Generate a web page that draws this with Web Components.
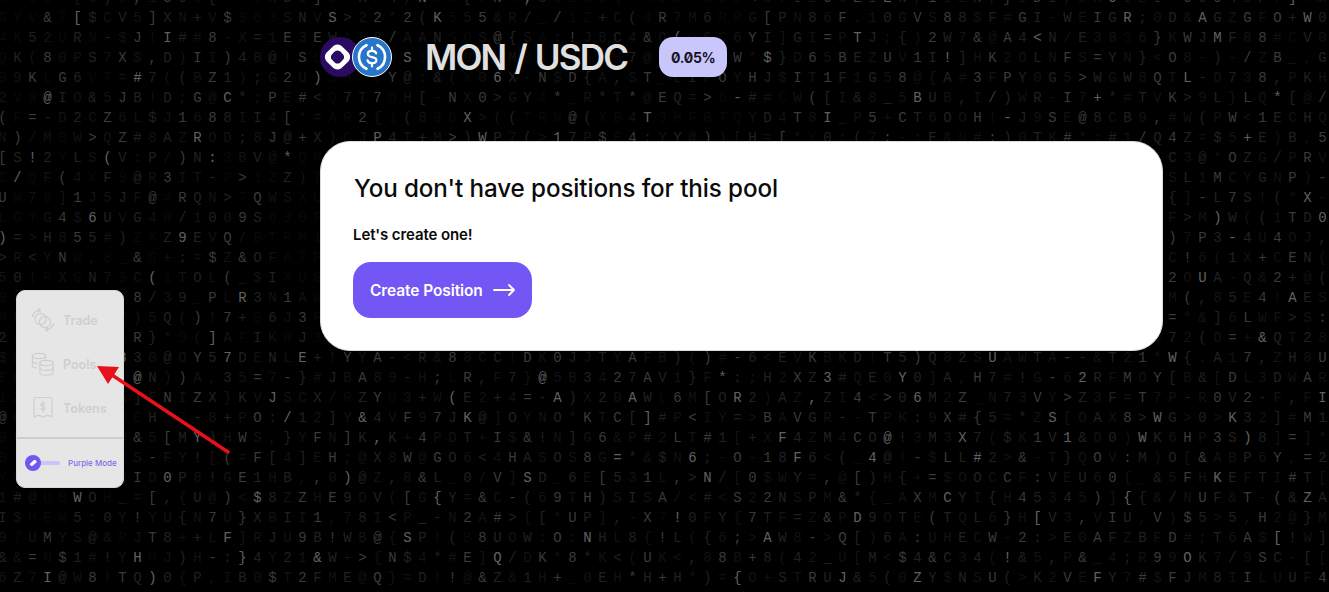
<!DOCTYPE html>
<html lang="en">
<head>
<meta charset="utf-8">
<title>MON / USDC</title>
<style>
  html, body { margin: 0; height: 592px; overflow: hidden; background: #000; }
  body { position: relative; font-family: Inter, "Liberation Sans", sans-serif; }
</style>
</head>
<body>
<matrix-rain></matrix-rain>
<app-page>
  <side-rail slot="rail">
    <rail-item label="Trade">
      <svg slot="icon" viewBox="0 0 24 24" width="24" height="24" fill="none" stroke="currentColor" stroke-width="1.2" stroke-linecap="round" stroke-linejoin="round">
        <circle cx="9.5" cy="11" r="5.6"/><circle cx="14" cy="14" r="5.6"/>
        <path d="M1.5 8.5C2.5 4.5 5.5 2.2 9.5 2.2"/><path d="M7.5 .6l2 1.6-2 1.6"/>
        <path d="M22.5 15.5c-.9 4-3.9 6.3-8 6.3"/><path d="M16.5 23.4l-2-1.6 2-1.6"/>
      </svg>
    </rail-item>
    <rail-item label="Pools">
      <svg slot="icon" viewBox="0 0 24 24" width="24" height="24" fill="none" stroke="currentColor" stroke-width="1.2" stroke-linecap="round" stroke-linejoin="round">
        <ellipse cx="8" cy="4" rx="6.6" ry="2.6"/>
        <path d="M1.4 4v9.5c0 1.3 1.9 2.3 4.6 2.5"/><path d="M1.4 8.7c0 1.3 2 2.4 4.6 2.6"/><path d="M14.6 4v3"/>
        <ellipse cx="15.5" cy="11" rx="6.6" ry="2.6"/>
        <path d="M8.9 11v9.5c0 1.5 3 2.6 6.6 2.6s6.6-1.1 6.6-2.6V11"/><path d="M8.9 15.8c0 1.5 3 2.6 6.6 2.6s6.6-1.1 6.6-2.6"/>
      </svg>
    </rail-item>
    <rail-item label="Tokens">
      <svg slot="icon" viewBox="0 0 24 24" width="24" height="24" fill="none" stroke="currentColor" stroke-width="1.2" stroke-linecap="round" stroke-linejoin="round">
        <path d="M5 1.500h14c1.200 0 2 .8 2 2V21c-1.300-.9-3-1.700-4.500-1.700-1.800 0-3 1.700-4.500 1.700s-2.700-1.700-4.500-1.700C6 19.300 4.300 20.100 3 21V3.500c0-1.200.8-2 2-2z"/>
        <path d="M14.200 8.300c-.4-.9-1.200-1.300-2.200-1.300-1.300 0-2.200.7-2.200 1.700 0 2.300 4.400 1.100 4.400 3.400 0 1-.9 1.700-2.200 1.700-1 0-1.800-.4-2.200-1.300"/>
        <path d="M12 5.500v10"/>
      </svg>
    </rail-item>
    <rail-toggle slot="footer">Purple Mode</rail-toggle>
  </side-rail>
  <pool-header slot="head" pair="MON / USDC" fee="0.05%"></pool-header>
  <empty-card slot="main" title="You don't have positions for this pool" note="Let's create one!">
    <action-button>Create Position</action-button>
  </empty-card>
</app-page>
<note-arrow></note-arrow>

<script>
// what could be read off the reference, one row per 20px. ~ is a cell too faint to read
const RAIN_ROWS = [
  "~~~~~[6)~,150~[~~~RU0]~~K~4,N~~[7N~;5~~~~~~~~~~~~~<07IE06Z1EN,1IEN,}IDI,#X0IEI=0004D/7]~",
  "~~~&~[$CV5]XN+V$~~~SNVS>22*2(K~55&R/_/~~+C(~R7M6~~G[PN86F.10GVS88$F#GI-WEIGR;0D&AGZGFO+W0",
  "~~52~R~-$J!I##8-X=1E3EW~~8/AAN~~S@{S~:!J8C4&Q(~S~6YI]GI=PTJ;{)2W7&@A4<N/E38~6}KWJMF88#~V0",
  "~K(80PS7X$,D)II)4B@!S~~~~~~S~~~~~~M~~~~~~~7@~~~~~W*$}D65BEZUV1I!]HK2OLNFS=YN}<O8-)-/ZB_,G",
  "~9K~G6~~=#7((BZ1);G2U)~~~~Y@:&(~06X-N$D{A,ST_LIFOYHJ$IT1F1G58@{A#3FPY0G5>WGW8QTL-O738,PKH",
  "2~~@IO&5JB!D;G@C*;PE#<~7T7~H[-NX0>GY~*_R*T*@EQ=>~-##~W([I&8_5BUB,I/)WR-I7+*#TVK>9L}LQ*[@/",
  "(~=-D2CZ6L$J1688II4[*=~~2{~(8~~X>((~~~@(~~4T~~~~~~YD4T8I_P5+CT6OOH!-J9SE@8CB9,#W(PW<1ECHQ",
  "N)/M~W>QZ#8AZROD;8J@+X)~JP4T+M>)WP7(>17P$~4:YY@))[H=[*~0:(7:-;E&~#:)0TK#*;#1/Q4Z=$5+E)B,5",
  "[S!2~LS(V:P/)N:~BV@*~~~~~~~~~~~~~~~~~~~~~~~~~~~~~~~~~~~~~~~~~~~~~~~~~~~~~~~~~~C3@*OZG/PRV",
  "~/~F(4~F~@R3IT-~>~~Z)~~~~~~~~~~~~~~~~~~~~~~~~~~~~~~~~~~~~~~~~~~~~~~~~~~~~~~~~~SL1MCYGNP)-",
  "U~7~]1J5JF@~RQN>~QWS~~~~~~~~~~~~~~~~~~~~~~~~~~~~~~~~~~~~~~~~~~~~~~~~~~~~~~~~~~{]-L7S!(*X-",
  "~~~G4$6UVG4~/1009S~~~~~~~~~~~~~~~~~~~~~~~~~~~~~~~~~~~~~~~~~~~~~~~~~~~~~~~~~~~~F>M)W((1TD0",
  ")=>H855#)~~Z9EVQ/~~~~~~~~~~~~~~~~~~~~~~~~~~~~~~~~~~~~~~~~~~~~~~~~~~~~~~~~~~~~~)7P3-4U4OJ,",
  ">R<YN~,~_&~+:=$Z&OF~~~~~~~~~~~~~~~~~~~~~~~~~~~~~~~~~~~~~~~~~~~~~~~~~~~~~~~~~~~C!6(1X+CEN(",
  "50!~X~N7~C(~TOL(_$I~~~~~~~~~~~~~~~~~~~~~~~~~~~~~~~~~~~~~~~~~~~~~~~~~~~~~~~~~~~2OUA-Q&2+@(",
  "~~~~~~~~~8/39_PLR3N1A~~~~~~~~~~~~~~~~~~~~~~~~~~~~~~~~~~~~~~~~~~~~~~~~~~~~~~~~~M(,85E4!AES",
  "~~~~~~~~~)5Q()!7+~6J3~~~~~~~~~~~~~~~~~~~~~~~~~~~~~~~~~~~~~~~~~~~~~~~~~~~~~~~~~=*&]6LWF>S:",
  "2~~~~~~~~R}*~(]A~IK~J~~~~~~~~~~~~~~~~~~~~~~~~~~~~~~~~~~~~~~~~~~~~~~~~~~~~~~~~~72(O=+&QT28",
  "$~~~~~~~830@OY57DENLE+!YYA-<R&88CC!DK0JJTYAFB)()#-6<EVKBKD!T5)Q82SUAWTA--&T21*W{.A17,ZH8U",
  "~~~~~~~~~@N))A,35=7-}#JBA89-H;~R,F7}@5B3427AV1}F*:;H2XZ3#QE0Y0]A,H7#!G-62RFMOY[B&[DL3DWAR",
  "~~~~~~~~A]ENIZX}KVJSCX/~ZY~3+W(E2+4=-A)X20AW~6M[OR2)AZ,ZI4<>06M2Z_N73VY>Z3F=T7P-R0V2-F,FI",
  "@~~~~~~~~~H~~-8+PO:/12]Y&4VF97JK@]OYNO*KTC[]#P<IY=>BAVGR--TPK:9X#{5=*ZS[OAX8>WG>0>K32]#M1",
  "~~~~~~~~~&5[MY)HWS,}YFN]K,K+4PDT+I$&!N]G6&P#2LT#1[+XF4ZM4CO@!3M3X7($K1V1&O0)WK6HP3S)8]=]*",
  "~~~~~~~~~S-FY![(=F[4]EH;@X8W@GO6<4HASOS8G=*&$N6;-O-18F6<(_4@!-$LL#2>&-T}QOV:M)O[&ABP6Y,=2",
  "~~~~~~~~~ID0P8!GE1HB,,0)@Z,8&L_0/V]SD_6E[531L,>N/[0$WY=,@[)H{+=$OOCCF:VEU60{_&5FHKEFTI#T[",
  "1#@~~WO~_=[,{U@)<$8ZZHE9DV([G{Y=&C-(69TH)SISA/<#<S22NSPM&*{_AXMCYI{H45345)]{{&/NUF&T-(&ZA",
  "I$~~~5:0Y!YU{N7U}XBII1,78I<P_-N2A#>{[*UP],-X~!0FY{7TF=Z&PD9OTE(TQL6}H[V3,VIU,V)$5>5,H2@}M",
  "9~UMYS@&~JT8++LF]RJU9B!WB@{SP!(~8UOW:O:NHL8{!L({6;>AW8->Q[)6A:UHECW-2:>E0AFZBFD#;T6A$[!W]",
  "&&=~$1#!YH~J)H-:}4Y21&W+>{N$4*#E]Q/DK*8*K<(UK<,88B+8(42_U[M<$4&C34(!&5,P&_4;R99OK7/9SC-[[",
  "6Z7I@W8!TQ)0{P,IB0$T2FME@Q}=D!!@&Z&1H+_0EH*H+H*)={O+STRUJ&5(0ZY$NSU(>K2VEFY7#$FJM8IILUUF4"
];

class MatrixRain extends HTMLElement {
  constructor() {
    super();
    this.attachShadow({ mode: 'open' });
    this.shadowRoot.innerHTML = `
      <style>
        :host {
          display: block;
          position: absolute;
          top: -12px;
          left: -5px;
          width: 1340px;
          height: 604px;
          overflow: hidden;
        }
        .grid {
          display: grid;
          grid-template-columns: repeat(89, 15px);
          grid-auto-rows: 20px;
          font: 14px/20px "Liberation Mono", monospace;
          text-align: center;
        }
      </style>
      <div class="grid"></div>
    `;
  }

  connectedCallback() {
    const filler = 'ABCDEFGHKLMNPQRSTUVWXYZ0123456789';
    let html = '';
    RAIN_ROWS.forEach((row, r) => {
      for (let c = 0; c < 89; c++) {
        const h = (Math.imul(r * 131 + c * 7 + 3, 2654435761) >>> 8) % 100;
        const faint = row[c] === '~';
        const ch = faint ? filler[h % filler.length] : row[c];
        let grey = 18;
        if (faint) grey = 9;
        else if (h > 92) grey = 96;
        else if (h > 72) grey = 58;
        else if (h > 42) grey = 32;
        const safe = ch === '<' ? '&lt;' : ch === '&' ? '&amp;' : ch === '>' ? '&gt;' : ch;
        html += `<span style="color:rgb(${grey},${grey},${grey})">${safe}</span>`;
      }
    });
    this.shadowRoot.querySelector('.grid').innerHTML = html;
  }
}

class AppPage extends HTMLElement {
  constructor() {
    super();
    this.attachShadow({ mode: 'open' });
    this.shadowRoot.innerHTML = `
      <style>
        :host {
          display: grid;
          grid-template-columns: 320px 843px;
          position: relative;
          height: 592px;
        }
        .main {
          display: flex;
          flex-direction: column;
          gap: 64px;
          padding-top: 37px;
        }
      </style>
      <div><slot name="rail"></slot></div>
      <div class="main">
        <slot name="head"></slot>
        <slot name="main"></slot>
      </div>
    `;
  }
}

class SideRail extends HTMLElement {
  constructor() {
    super();
    this.attachShadow({ mode: 'open' });
    this.shadowRoot.innerHTML = `
      <style>
        :host {
          display: block;
          box-sizing: border-box;
          width: 108px;
          height: 198px;
          margin: 290px 0 0 16px;
          background: #e6e6e6;
          border: 1px solid #d9d9d9;
          border-radius: 9px;
        }
        .items {
          display: flex;
          flex-direction: column;
          gap: 20px;
          height: 148px;
          padding-top: 17px;
          box-sizing: border-box;
          border-bottom: 2px solid #cdcdcd;
        }
      </style>
      <div class="items"><slot></slot></div>
      <slot name="footer"></slot>
    `;
  }
}

class RailItem extends HTMLElement {
  constructor() {
    super();
    this.attachShadow({ mode: 'open' });
    this.shadowRoot.innerHTML = `
      <style>
        :host {
          display: flex;
          align-items: center;
          gap: 8px;
          height: 24px;
          padding-left: 14px;
          color: #cfcfcf;
          font: 600 12.500px Inter, sans-serif;
        }
        ::slotted(svg) { flex: none; }
      </style>
      <slot name="icon"></slot>
      <span class="label"></span>
    `;
  }

  connectedCallback() {
    this.shadowRoot.querySelector('.label').textContent = this.getAttribute('label');
  }
}

class RailToggle extends HTMLElement {
  constructor() {
    super();
    this.attachShadow({ mode: 'open' });
    this.shadowRoot.innerHTML = `
      <style>
        :host {
          display: flex;
          align-items: center;
          height: 47px;
          padding-left: 8px;
          color: #7d6ee6;
          font: 500 8px Inter, sans-serif;
          white-space: nowrap;
        }
        .track {
          display: flex;
          align-items: center;
          width: 35px;
          height: 4px;
          margin-right: 8px;
          background: #c9c4fa;
          border-radius: 2px;
        }
        .knob {
          flex: none;
          display: grid;
          place-items: center;
          width: 16px;
          height: 16px;
          background: #6f58f2;
          border-radius: 50%;
        }
        svg { display: block; }
      </style>
      <div class="track">
        <div class="knob">
          <svg viewBox="0 0 10 10" width="10" height="10"><path d="M1.500 6.200 5.700 2.300c.6-.5 1.500-.5 2 0l.6.6c.5.5.4 1.300-.1 1.800L4.600 7.800c-.4.4-1 .4-1.400.1z" fill="#fff"/></svg>
        </div>
      </div>
      <slot></slot>
    `;
  }
}

class TokenPair extends HTMLElement {
  constructor() {
    super();
    this.attachShadow({ mode: 'open' });
    this.shadowRoot.innerHTML = `
      <style>
        :host { display: block; flex: none; width: 72px; height: 40px; }
        svg { display: block; }
      </style>
      <svg viewBox="0 0 72 40" width="72" height="40">
        <circle cx="20" cy="20" r="20" fill="#2b0a61"/>
        <path transform="translate(17.500 20) scale(1.200) translate(-20 -20)" d="M20 9.500c-2 0-3 .8-4.500 2.300l-3.700 3.700C10.300 17 9.500 18 9.500 20s.8 3 2.300 4.500l3.700 3.700c1.500 1.500 2.500 2.300 4.500 2.300s3-.8 4.500-2.300l3.700-3.700c1.500-1.500 2.300-2.500 2.300-4.500s-.8-3-2.300-4.500l-3.700-3.700C23 10.300 22 9.500 20 9.500zm0 5c1.300 0 2 .6 3 1.600l.9.900c1 1 1.600 1.700 1.600 3s-.6 2-1.600 3l-.9.900c-1 1-1.700 1.600-3 1.600s-2-.6-3-1.600l-.9-.9c-1-1-1.600-1.700-1.600-3s.6-2 1.600-3l.9-.9c1-1 1.700-1.600 3-1.600z" fill="#fff" fill-rule="evenodd"/>
        <circle cx="52" cy="20" r="19.500" fill="#2775ca" stroke="#fff" stroke-width="1"/>
        <path d="M46.500 8.200a13 13 0 0 0 0 23.600M57.500 8.200a13 13 0 0 1 0 23.600" fill="none" stroke="#fff" stroke-width="2.600" stroke-linecap="round"/>
        <path d="M56.200 16.400c-.5-1.700-2.100-2.500-4.200-2.500-2.400 0-4.200 1.200-4.200 3.100 0 4.300 8.600 2 8.600 6.100 0 2-1.900 3.100-4.400 3.100-2.300 0-4-1-4.500-2.800" fill="none" stroke="#fff" stroke-width="2.200" stroke-linecap="round"/>
        <path d="M52 10.600v3.200M52 26.200v3.200" stroke="#fff" stroke-width="2.200" stroke-linecap="round"/>
      </svg>
    `;
  }
}

class PoolHeader extends HTMLElement {
  constructor() {
    super();
    this.attachShadow({ mode: 'open' });
    this.shadowRoot.innerHTML = `
      <style>
        :host {
          display: flex;
          align-items: center;
          height: 40px;
        }
        h1 {
          margin: 0 32px 0 33px;
          color: #e0e0e0;
          font: 600 35px/40px Inter, sans-serif;
          letter-spacing: -1.800px;
          word-spacing: 2px;
          white-space: nowrap;
        }
        .fee {
          display: grid;
          place-items: center;
          width: 68px;
          height: 40px;
          background: #c9c6fb;
          color: #15131f;
          border-radius: 14px;
          font: 700 14px Inter, sans-serif;
          font-variant-numeric: slashed-zero;
          letter-spacing: -.3px;
        }
      </style>
      <token-pair></token-pair>
      <h1></h1>
      <div class="fee"></div>
    `;
  }

  connectedCallback() {
    this.shadowRoot.querySelector('h1').textContent = this.getAttribute('pair');
    this.shadowRoot.querySelector('.fee').textContent = this.getAttribute('fee');
  }
}

class EmptyCard extends HTMLElement {
  constructor() {
    super();
    this.attachShadow({ mode: 'open' });
    this.shadowRoot.innerHTML = `
      <style>
        :host {
          display: block;
          box-sizing: border-box;
          height: 210px;
          padding: 31px 32px 0;
          background: #fff;
          border: 1px solid #dcdcdc;
          border-radius: 30px;
          color: #0a0a0a;
        }
        h2 {
          margin: 0 0 0 1px;
          font: 500 24.200px/32px Inter, sans-serif;
          letter-spacing: -.1px;
        }
        p {
          margin: 19px 0 16px;
          font: 600 15px/22px Inter, sans-serif;
          letter-spacing: -.1px;
        }
      </style>
      <h2></h2>
      <p></p>
      <slot></slot>
    `;
  }

  connectedCallback() {
    this.shadowRoot.querySelector('h2').textContent = this.getAttribute('title');
    this.shadowRoot.querySelector('p').textContent = this.getAttribute('note');
    this.removeAttribute('title');
  }
}

class ActionButton extends HTMLElement {
  constructor() {
    super();
    this.attachShadow({ mode: 'open' });
    this.shadowRoot.innerHTML = `
      <style>
        :host {
          display: inline-flex;
          align-items: center;
          gap: 10px;
          box-sizing: border-box;
          width: 179px;
          height: 56px;
          padding-left: 17px;
          background: #7357f5;
          border-radius: 18px;
          color: #fff;
          font: 600 15.500px Inter, sans-serif;
          letter-spacing: -.1px;
          white-space: nowrap;
        }
        svg { flex: none; display: block; }
      </style>
      <slot></slot>
      <svg viewBox="0 0 22 12" width="22" height="12" fill="none" stroke="#fff" stroke-width="1.800" stroke-linecap="round" stroke-linejoin="round">
        <path d="M1 6h20M16 1l5 5-5 5"/>
      </svg>
    `;
  }
}

class NoteArrow extends HTMLElement {
  constructor() {
    super();
    this.attachShadow({ mode: 'open' });
    this.shadowRoot.innerHTML = `
      <style>
        :host { display: block; position: absolute; left: 0; top: 0; pointer-events: none; }
        svg { display: block; }
      </style>
      <svg width="240" height="480" viewBox="0 0 240 480">
        <path d="M228 452 112 375" stroke="#e8111b" stroke-width="3.500" stroke-linecap="round"/>
        <path d="M97 366 119 367 108 384z" fill="#e8111b"/>
      </svg>
    `;
  }
}

customElements.define('matrix-rain', MatrixRain);
customElements.define('app-page', AppPage);
customElements.define('side-rail', SideRail);
customElements.define('rail-item', RailItem);
customElements.define('rail-toggle', RailToggle);
customElements.define('token-pair', TokenPair);
customElements.define('pool-header', PoolHeader);
customElements.define('empty-card', EmptyCard);
customElements.define('action-button', ActionButton);
customElements.define('note-arrow', NoteArrow);
</script>
</body>
</html>
